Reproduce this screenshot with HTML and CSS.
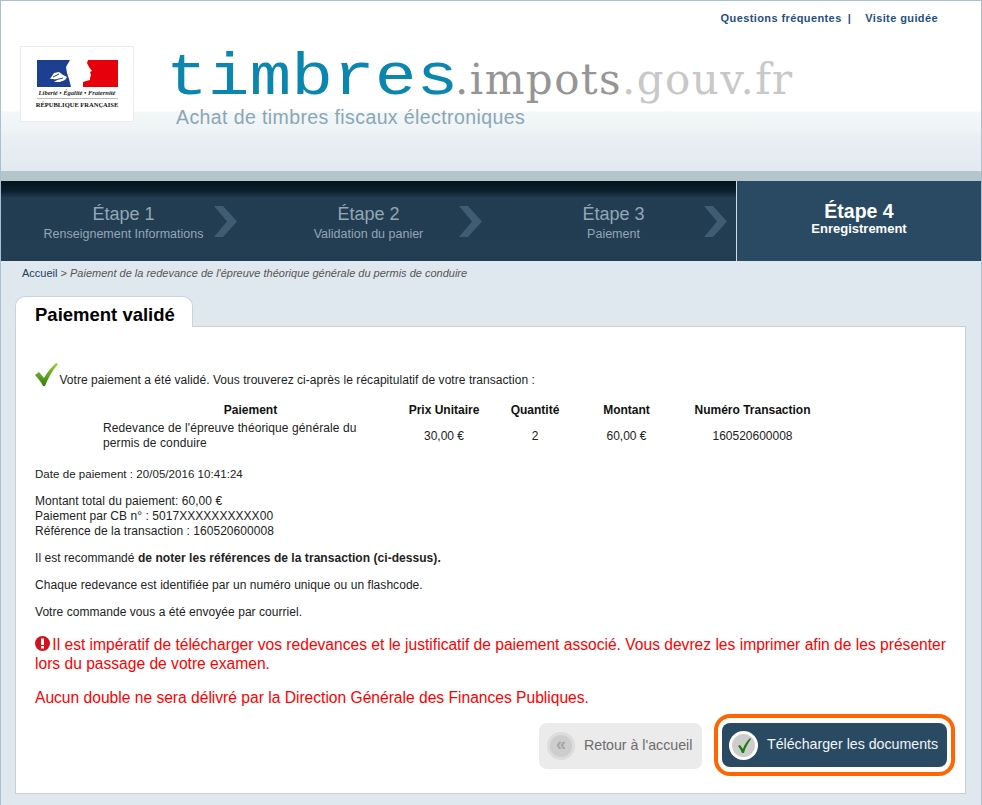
FILE: index.html
```html
<!DOCTYPE html>
<html lang="fr">
  <head>
    <meta charset="UTF-8" />
    <meta name="viewport" content="width=device-width, initial-scale=1.0" />
    <title>timbres.impots.gouv.fr</title>
    <link rel="stylesheet" href="styles.css">
  </head>
  <body>
    <div class="page">
      <header class="header">
        <nav class="top-links">
          <a href="#">Questions fréquentes</a>
          <span class="sep">|</span>
          <a href="#">Visite guidée</a>
        </nav>
        <div class="brand">
          <div class="marianne">
            <svg class="flag" width="81" height="27" viewBox="0 0 81 27">
              <rect width="36" height="27" fill="#1d3f92" />
              <rect x="46" width="35" height="27" fill="#e6000b" />
              <path d="M33 0h18l-1 3 2 4 3 4-2 1 1 3-1 3 0 2-4 1-3 1-1 5H34l-2-8-2-6-1-6z" fill="#fff" />
              <path d="M13 19l4-6 5-1 4 3 4 2-2 3-5 2-6 0 3-2-4-1z" fill="#fff" />
              <path d="M16 17l6-3M18 20l8-2M21 23l8-2" stroke="#1d3f92" stroke-width="1" fill="none" />
            </svg>
            <div class="motto">Liberté • Égalité • Fraternité</div>
            <div class="republic">RÉPUBLIQUE FRANÇAISE</div>
          </div>
          <div class="wordmark">
            <div class="site-name"><span class="w-main">timbres</span><span class="w-mid">.impots</span><span class="w-end">.gouv.fr</span></div>
            <div class="tagline">Achat de timbres fiscaux électroniques</div>
          </div>
        </div>
      </header>

      <div class="band"></div>

      <div class="steps">
        <div class="step">
          <div class="step-num">Étape 1</div>
          <div class="step-label">Renseignement Informations</div>
          <svg class="chevron" width="23" height="31" viewBox="0 0 23 31"><path d="M0 0h9l14 15.500L9 31H0l13-15.500z" /></svg>
        </div>
        <div class="step">
          <div class="step-num">Étape 2</div>
          <div class="step-label">Validation du panier</div>
          <svg class="chevron" width="23" height="31" viewBox="0 0 23 31"><path d="M0 0h9l14 15.500L9 31H0l13-15.500z" /></svg>
        </div>
        <div class="step">
          <div class="step-num">Étape 3</div>
          <div class="step-label">Paiement</div>
          <svg class="chevron" width="23" height="31" viewBox="0 0 23 31"><path d="M0 0h9l14 15.500L9 31H0l13-15.500z" /></svg>
        </div>
        <div class="step current">
          <div class="step-num">Étape 4</div>
          <div class="step-label">Enregistrement</div>
        </div>
      </div>

      <main class="content">
        <div class="breadcrumb"><a href="#">Accueil</a> &gt; <em>Paiement de la redevance de l'épreuve théorique générale du permis de conduire</em></div>

        <div class="tab">Paiement validé</div>
        <section class="panel">
          <p class="valid">
            <svg class="check" width="23" height="24" viewBox="0 0 23 24">
              <defs>
                <linearGradient id="green" x1="0" y1="0" x2="0" y2="1">
                  <stop offset="0" stop-color="#9ad12e" />
                  <stop offset="1" stop-color="#2f7d12" />
                </linearGradient>
              </defs>
              <path d="M0 12l4-3 5 6C12 9 17 4 21 0l2 1C17 8 13 15 10 23H8C6 19 3 15 0 12z" fill="url(#green)" />
            </svg>
            Votre paiement a été validé. Vous trouverez ci-après le récapitulatif de votre transaction :
          </p>

          <table class="recap">
            <thead>
              <tr>
                <th class="col-name">Paiement</th>
                <th class="col-price">Prix Unitaire</th>
                <th class="col-qty">Quantité</th>
                <th class="col-total">Montant</th>
                <th class="col-num">Numéro Transaction</th>
              </tr>
            </thead>
            <tbody>
              <tr>
                <td class="item">Redevance de l'épreuve théorique générale du permis de conduire</td>
                <td>30,00 €</td>
                <td>2</td>
                <td>60,00 €</td>
                <td>160520600008</td>
              </tr>
            </tbody>
          </table>

          <p class="date">Date de paiement : 20/05/2016 10:41:24</p>
          <p>Montant total du paiement: 60,00 €<br>Paiement par CB n° : 5017XXXXXXXXXX00<br>Référence de la transaction : 160520600008</p>
          <p>Il est recommandé <strong>de noter les références de la transaction (ci-dessus).</strong></p>
          <p>Chaque redevance est identifiée par un numéro unique ou un flashcode.</p>
          <p>Votre commande vous a été envoyée par courriel.</p>

          <p class="warning">
            <svg class="alert" width="15" height="15" viewBox="0 0 15 15">
              <circle cx="7.500" cy="7.500" r="7.500" fill="#d3121c" />
              <rect x="6" y="2.500" width="3" height="6.500" fill="#fff" />
              <rect x="6" y="10" width="3" height="2.500" fill="#fff" />
            </svg>
            Il est impératif de télécharger vos redevances et le justificatif de paiement associé. Vous devrez les imprimer afin de les présenter lors du passage de votre examen.
          </p>
          <p class="warning second">Aucun double ne sera délivré par la Direction Générale des Finances Publiques.</p>

          <div class="actions">
            <a class="btn btn-back" href="#">
              <span class="round back-round">«</span>
              Retour à l'accueil
            </a>
            <div class="highlight">
              <a class="btn btn-download" href="#">
                <span class="round ok-round">
                  <svg width="16" height="16" viewBox="0 0 16 16"><path d="M2 9l2-1 3 4c1-4 4-8 7-11l1 1c-3 4-6 9-7 14H6C5 13 3.500 11 2 9z" fill="#1c7a12" /></svg>
                </span>
                Télécharger les documents
              </a>
            </div>
          </div>
        </section>
      </main>
    </div>
  </body>
</html>
```

FILE: styles.css
```css
html, body {
  margin: 0;
  padding: 0;
}

body {
  font-family: "Liberation Sans", Arial, sans-serif;
  font-size: 12px;
  color: #222;
  background: #e0e8ef;
}

a {
  color: inherit;
  text-decoration: none;
}

.page {
  width: 980px;
  height: 804px;
  overflow: hidden;
  border: 1px solid #a9bfd3;
  border-bottom: 0;
  background: #e0e8ef;
}

/* header */
.header {
  height: 170px;
  box-sizing: border-box;
  background: linear-gradient(#fff 0, #fff 110px, #f3f7f8 111px, #eef3f5 130px, #e9eff3 135px, #e2e9f0 170px);
  overflow: hidden;
}

.top-links {
  display: flex;
  justify-content: flex-end;
  align-items: center;
  gap: 6px;
  height: 14px;
  margin-top: 10px;
  padding-right: 43px;
  font-size: 11px;
  font-weight: bold;
  color: #1f4f80;
  letter-spacing: 0.4px;
}

.top-links .sep {
  margin-right: 8px;
}

.brand {
  display: flex;
  margin-top: 21px;
  padding-left: 19px;
}

.marianne {
  width: 112px;
  height: 61px;
  border: 1px solid #e8ecee;
  background: #fff;
  display: flex;
  flex-direction: column;
  align-items: center;
  padding-top: 13px;
}

.flag {
  display: block;
}

.motto {
  font-family: "Liberation Serif", serif;
  font-style: italic;
  font-weight: bold;
  font-size: 6.5px;
  line-height: 8px;
  margin-top: 2px;
  width: 81px;
  text-align: center;
  padding-bottom: 1px;
  border-bottom: 1px solid #bbb;
  white-space: nowrap;
  color: #222;
}

.republic {
  font-family: "Liberation Serif", serif;
  font-weight: bold;
  font-size: 6.5px;
  line-height: 9px;
  margin-top: 1px;
  white-space: nowrap;
  color: #111;
}

.wordmark {
  margin-left: 32px;
}

.site-name {
  height: 57px;
  line-height: 56px;
  white-space: nowrap;
  margin-top: 4px;
}

.w-main {
  display: inline-block;
  font-family: "Liberation Mono", monospace;
  font-size: 60px;
  color: #0b86ae;
  transform: scaleX(1.16);
  transform-origin: left center;
  margin-right: 37px;
}

.w-mid,
.w-end {
  font-family: "DejaVu Serif", serif;
  font-size: 42px;
  letter-spacing: 1.4px;
}

.w-mid {
  color: #959595;
}

.w-end {
  color: #c8c8c8;
}

.tagline {
  margin-left: 10px;
  font-size: 19.5px;
  line-height: 20px;
  color: #8aa6b5;
  letter-spacing: 0.4px;
  white-space: nowrap;
}

.band {
  height: 10px;
  background: #b4c5cc;
}

/* steps */
.steps {
  display: grid;
  grid-template-columns: 245px 245px 245px 1fr;
  height: 80px;
  background: linear-gradient(#05131b 0, #0b1f2c 10px, #223d52 17px, #233d53 100%);
}

.step {
  position: relative;
  text-align: center;
  color: #93a7b4;
  padding-top: 23px;
}

.step-num {
  font-size: 18px;
  line-height: 20px;
}

.step-label {
  font-size: 12.5px;
  line-height: 17px;
  margin-top: 2px;
}

.chevron {
  position: absolute;
  right: 9px;
  top: 25px;
  fill: #3f5c72;
}

.step.current {
  background: #2a4a64;
  border-left: 1px solid #d3dde3;
  color: #fff;
  font-weight: bold;
  padding-top: 20px;
}

.step.current .step-num {
  font-size: 19.5px;
}

.step.current .step-label {
  font-size: 13px;
  line-height: 16px;
  margin-top: 0;
}

/* content */
.content {
  padding: 0 15px 0 14px;
}

.breadcrumb {
  height: 35px;
  padding: 5px 0 0 7px;
  box-sizing: border-box;
  font-size: 11px;
  line-height: 14px;
  color: #555;
  white-space: nowrap;
}

.breadcrumb a {
  color: #20415c;
}

.tab {
  box-sizing: border-box;
  width: 178px;
  height: 31px;
  margin-bottom: -1px;
  position: relative;
  z-index: 1;
  padding: 8px 0 0 19px;
  background: #fff;
  border: 1px solid #ccd3d8;
  border-bottom: 0;
  border-radius: 10px 10px 0 0;
  font-size: 18.5px;
  line-height: 20px;
  font-weight: bold;
  color: #000;
}

.panel {
  box-sizing: border-box;
  height: 468px;
  background: #fff;
  border: 1px solid #c9cfd3;
  padding: 36px 19px 0;
}

.panel p {
  margin: 0 0 12px;
  line-height: 15px;
  color: #222;
  letter-spacing: 0.05px;
}

.panel .valid {
  margin-bottom: 16px;
  height: 24px;
}

.panel .date {
  font-size: 11.5px;
}

.check {
  vertical-align: -3px;
  margin-right: -2px;
}

.recap {
  width: 786px;
  border-collapse: collapse;
  table-layout: fixed;
  margin: 0 0 16px;
}

.recap th {
  font-size: 12px;
  line-height: 15px;
  padding: 0 0 3px;
  color: #111;
  text-align: center;
}

.recap td {
  padding: 0;
  line-height: 15px;
  text-align: center;
  color: #222;
}

.recap th.col-name {
  width: 361px;
  padding-left: 70px;
  box-sizing: border-box;
}

.recap td.item {
  text-align: left;
  padding: 0 30px 0 68px;
  letter-spacing: 0.1px;
}

.col-price {
  width: 96px;
}

.col-qty {
  width: 86px;
}

.col-total {
  width: 97px;
}

.col-num {
  width: 155px;
}

.panel .warning {
  font-size: 15.6px;
  line-height: 19px;
  color: #f00;
  margin: 15px 0 0;
  letter-spacing: 0;
}

.panel .warning.second {
  margin-top: 15px;
}

.alert {
  vertical-align: -1px;
  margin-right: -2px;
}

.actions {
  display: flex;
  justify-content: flex-end;
  align-items: flex-start;
  gap: 12px;
  margin-top: 7px;
  margin-right: -9px;
}

.btn {
  display: flex;
  align-items: center;
  font-size: 14.2px;
  border-radius: 8px;
  white-space: nowrap;
}

.btn-back {
  margin-top: 9px;
  width: 163px;
  height: 46px;
  box-sizing: border-box;
  padding: 0 0 3px 8px;
  gap: 9px;
  background: #ebebeb;
  color: #6c6c6c;
}

.round {
  display: flex;
  align-items: center;
  justify-content: center;
  box-sizing: border-box;
  width: 28px;
  height: 28px;
  border-radius: 50%;
  background: #cdcdcd;
}

.back-round {
  border: 3px solid #dcdcdc;
  font-size: 18px;
  font-weight: bold;
  color: #a5a5a5;
  padding-bottom: 3px;
  margin-top: 3px;
}

.highlight {
  padding: 5px 4px;
  border: 4px solid #ff6600;
  border-radius: 16px;
  background: #fff;
}

.btn-download {
  width: 225px;
  height: 44px;
  box-sizing: border-box;
  padding: 0 0 3px 7px;
  gap: 9px;
  background: #2a4a64;
  color: #f2f5f7;
}

.ok-round {
  width: 29px;
  height: 29px;
  border: 3px solid #fff;
  margin-top: 3px;
}
```
